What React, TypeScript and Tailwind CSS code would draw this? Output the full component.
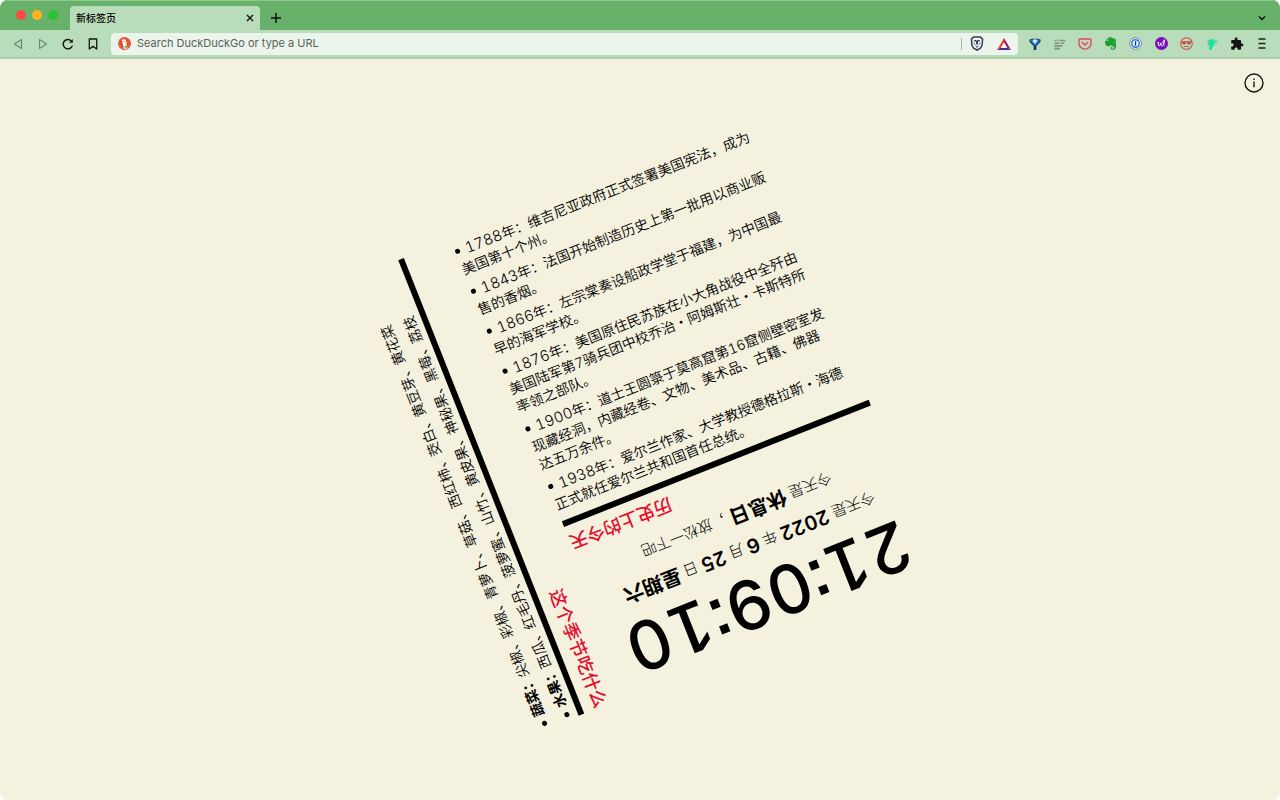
import type { ReactNode } from "react";
import { MdExtension } from "react-icons/md";
import { SiEvernote } from "react-icons/si";

const HISTORY = [
  { year: 1788, text: "维吉尼亚政府正式签署美国宪法，成为\n美国第十个州。" },
  { year: 1843, text: "法国开始制造历史上第一批用以商业贩\n售的香烟。" },
  { year: 1866, text: "左宗棠奏设船政学堂于福建，为中国最\n早的海军学校。" },
  {
    year: 1876,
    text: "美国原住民苏族在小大角战役中全歼由\n美国陆军第7骑兵团中校乔治・阿姆斯壮・卡斯特所\n率领之部队。",
  },
  {
    year: 1900,
    text: "道士王圆箓于莫高窟第16窟侧壁密室发\n现藏经洞，内藏经卷、文物、美术品、古籍、佛器\n达五万余件。",
  },
  { year: 1938, text: "爱尔兰作家、大学教授德格拉斯・海德\n正式就任爱尔兰共和国首任总统。" },
];

const SEASON = [
  { kind: "蔬菜", foods: ["尖椒", "彩椒", "青萝卜", "草菇", "西红柿", "茭白", "黄豆芽", "黄花菜"] },
  { kind: "水果", foods: ["西瓜", "红毛丹", "菠萝蜜", "山竹", "黄皮果", "神秘果", "黑莓", "荔枝"] },
];

function IconButton({ label, children }: { label: string; children: ReactNode }) {
  return (
    <button type="button" aria-label={label} className="flex size-4 shrink-0 items-center justify-center">
      {children}
    </button>
  );
}

function TabStrip() {
  return (
    <div className="flex h-[30px] items-end bg-[#68b16a] shadow-[inset_0_1px_0_#8fc591]">
      <div className="mb-2.5 ml-4 flex w-[54px] gap-1.5">
        <button type="button" aria-label="Close window" className="size-2.5 rounded-full bg-[#fe4a47]" />
        <button type="button" aria-label="Minimize window" className="size-2.5 rounded-full bg-[#fdb124]" />
        <button type="button" aria-label="Zoom window" className="size-2.5 rounded-full bg-[#29c231]" />
      </div>
      <div className="flex h-6 w-[190px] items-center justify-between rounded-t bg-[#b9dcba] pr-0.5 pl-1.5">
        <span className="text-[10px] font-medium text-black">新标签页</span>
        <IconButton label="Close tab">
          <svg viewBox="0 0 10 10" className="size-2.5" stroke="#111" strokeWidth="1.4">
            <path d="M2 2l6 6M8 2l-6 6" />
          </svg>
        </IconButton>
      </div>
      <div className="mb-1 ml-2 flex">
        <IconButton label="New tab">
          <svg viewBox="0 0 10 10" className="size-2.5" stroke="#111" strokeWidth="1.5">
            <path d="M5 0v10M0 5h10" />
          </svg>
        </IconButton>
      </div>
      <div className="mr-2.5 mb-1 ml-auto flex">
        <IconButton label="Search tabs">
          <svg viewBox="0 0 8 8" className="size-2" fill="none" stroke="#111" strokeWidth="1.4">
            <path d="M1 2.5l3 3 3-3" />
          </svg>
        </IconButton>
      </div>
    </div>
  );
}

function DuckIcon() {
  return (
    <svg viewBox="0 0 12 12" className="size-[13px] shrink-0">
      <circle cx="6" cy="6" r="6" fill="#de4b33" />
      <circle cx="6" cy="6" r="5" fill="none" stroke="#f0a08c" strokeWidth=".4" />
      <path d="M3.6 2.8c.7-1.2 3.6-1.2 3.9.9l.5 3.2.9 3.4a5 5 0 0 1-3.5.5z" fill="#fff" />
      <path d="M6.3 4.9c1.1-.4 2.4-.2 2.6.1s-1.2 1-2.4 1z" fill="#fdc20a" />
      <path d="M5.8 8.6l2.6-1v2.8l-2.6-.9z" fill="#65bc46" />
      <circle cx="5.7" cy="3.9" r=".5" fill="#2d4f8e" />
    </svg>
  );
}

function BraveIcon() {
  return (
    <svg viewBox="0 0 14 15" className="h-[15px] w-3.5">
      <path d="M3.6 1.1h6.8l2.2 2-.5 6L10.6 12 7 14.2 3.4 12 1.9 9.1l-.5-6z" fill="#f4f6f8" stroke="#3a3d4e" strokeWidth="1.5" />
      <path d="M3.8 4.2l1.6-.3L7 4.6l1.6-.7 1.6.3-.2 1-2.2.5.3 2.2L7 8.6l-1.1-.7.3-2.2L4 5.2z" fill="#3a3d4e" />
      <path d="M3.6 6.6l1.4 2M10.4 6.6l-1.4 2M5.4 9.6L7 10.6l1.6-1M7 10.6v1.6" fill="none" stroke="#3a3d4e" strokeWidth=".8" />
    </svg>
  );
}

function BatIcon() {
  return (
    <svg viewBox="0 0 14 12" className="h-3 w-3.5">
      <path d="M7 0L0 12l3.9-2.2L7 4.4z" fill="#ff3a24" />
      <path d="M7 0l7 12-3.9-2.2L7 4.4z" fill="#9e1f63" />
      <path d="M0 12h14l-3.9-2.2H3.9z" fill="#4b2a8f" />
      <path d="M7 4.4l3.1 5.4H3.9z" fill="#fff" />
    </svg>
  );
}

function Extensions() {
  return (
    <div className="flex w-[262px] shrink-0 items-center justify-between pr-2.5 pl-[9px]">
      <IconButton label="Video helper">
        <svg viewBox="0 0 12 12" className="size-3">
          <path d="M.2 1.8L3 .8h6l2.8 1-.6 2.4L7.4 8v4H4.6V8L.8 4.2z" fill="#173f6e" />
          <path d="M1.4 2.6L4 1.8h4l2.6.8L6 7.6z" fill="#2590ec" />
          <path d="M3.8 1.4h4.4L7.4 4.6 6 5.6 4.6 4.6z" fill="#d3ecfb" />
        </svg>
      </IconButton>
      <IconButton label="Reading list">
        <svg viewBox="0 0 12 12" className="size-3" stroke="#7f9481" strokeWidth="1.6">
          <path d="M.5 2.5h2M3.5 2.5h1.6M6 2.5h5.5M.5 5.2h5M6.6 5.2h3.6M.5 7.9h8M.5 10.6h5.5" />
        </svg>
      </IconButton>
      <IconButton label="Pocket">
        <svg viewBox="0 0 14 12" className="h-3 w-3.5" fill="none" stroke="#e8465c" strokeWidth="1.4" strokeLinejoin="round" strokeLinecap="round">
          <path d="M2 1h10a1 1 0 0 1 1 1v3.5a6 5.6 0 0 1-12 0V2a1 1 0 0 1 1-1z" />
          <path d="M4.3 4.6L7 7.1l2.7-2.5" />
        </svg>
      </IconButton>
      <IconButton label="Evernote">
        <SiEvernote className="size-[13px] text-[#1aa12f]" />
      </IconButton>
      <IconButton label="1Password">
        <svg viewBox="0 0 14 14" className="size-[13px]">
          <circle cx="7" cy="7" r="6.3" fill="#f7fafc" stroke="#74848f" />
          <circle cx="7" cy="7" r="4.1" fill="#fff" stroke="#1a73e8" strokeWidth="1.6" />
          <path d="M7 4.6v4.8" stroke="#243447" strokeWidth="1.6" />
        </svg>
      </IconButton>
      <IconButton label="Wallabag">
        <svg viewBox="0 0 14 14" className="size-[13px]" fill="none">
          <circle cx="7" cy="7" r="7" fill="#7a0dbd" />
          <path d="M2.4 6.4c1.2-1.2 1.9-.9 1.4 1.2-.6 2.8 1.6 2.6 2.8-1.4-.8 4.4 1.4 4.6 3 .8 1-2.4.9-4.2.1-4s-1.5 3.6.3 6.4" stroke="#fff" strokeWidth="1" />
        </svg>
      </IconButton>
      <IconButton label="Sunglasses">
        <svg viewBox="0 0 14 14" className="size-[13px]" fill="none" stroke="#cf4b45">
          <circle cx="7" cy="7" r="6.2" strokeWidth="1.1" />
          <path d="M1 5.2h12" />
          <path d="M2.5 5.2h3.8v1.6l-1 1H3.4l-.9-1zM7.7 5.2h3.8v1.6l-.9 1H8.7l-1-1z" fill="#cf4b45" strokeWidth=".4" />
          <path d="M4.4 10.2h5.2" />
        </svg>
      </IconButton>
      <IconButton label="Hummingbird">
        <svg viewBox="0 0 12 12" className="size-3" fill="#1fe0a0">
          <path d="M0 1.8l3.4.3L5 1.2l1.2.4L8.4.2l-.6 2.2 4 .5-.8 1.5-2.6.2 1.2 2.6-2-.6-.4 1.6L5.4 12H3.2l-.4-2.8 1-2.6L2 7.6 1.2 6l2-2.2z" />
        </svg>
      </IconButton>
      <IconButton label="Extensions">
        <MdExtension className="size-3.5 text-[#151515]" />
      </IconButton>
      <IconButton label="Menu">
        <svg viewBox="0 0 8 11" className="h-[11px] w-2" stroke="#222" strokeWidth="1.3">
          <path d="M.5 1h7M.5 5.5h7M.5 10h7" />
        </svg>
      </IconButton>
    </div>
  );
}

function Toolbar() {
  return (
    <div className="flex h-[29px] items-center border-b-2 border-[#adcfad] bg-[#b9dcba]">
      <div className="flex shrink-0 items-center gap-[9px] px-2.5">
        <IconButton label="Back">
          <svg viewBox="0 0 10 12" className="h-3 w-2.5" fill="none" stroke="#6b866c" strokeWidth="1.1" strokeLinejoin="round">
            <path d="M8.5 1.5v9L1.5 6z" />
          </svg>
        </IconButton>
        <IconButton label="Forward">
          <svg viewBox="0 0 10 12" className="h-3 w-2.5" fill="none" stroke="#6b866c" strokeWidth="1.1" strokeLinejoin="round">
            <path d="M1.5 1.5v9l7-4.5z" />
          </svg>
        </IconButton>
        <IconButton label="Reload">
          <svg viewBox="0 0 12 12" className="size-3" fill="none" stroke="#151515" strokeWidth="1.4">
            <path d="M10.4 7.6A4.7 4.7 0 1 1 9.4 3" />
            <path d="M10.8 1v3.8H7z" fill="#151515" stroke="none" />
          </svg>
        </IconButton>
        <IconButton label="Bookmark">
          <svg viewBox="0 0 10 12" className="h-3 w-2.5" fill="none" stroke="#151515" strokeWidth="1.3" strokeLinejoin="round">
            <path d="M1.3 1h7.4v10L5 8.4 1.3 11z" />
          </svg>
        </IconButton>
      </div>
      <div className="flex h-[22px] min-w-0 flex-1 items-center rounded bg-[#ebf5eb] pl-[7px]">
        <DuckIcon />
        <input
          type="text"
          aria-label="Address"
          placeholder="Search DuckDuckGo or type a URL"
          className="ml-1.5 min-w-0 flex-1 bg-transparent text-[11px] outline-none placeholder:text-[#59605a]"
        />
        <span className="h-3 w-px bg-[#adb5ad]" />
        <span className="flex items-center gap-[11px] pr-1.5 pl-[7px]">
          <IconButton label="Brave Shields">
            <BraveIcon />
          </IconButton>
          <IconButton label="Brave Rewards">
            <BatIcon />
          </IconButton>
        </span>
      </div>
      <Extensions />
    </div>
  );
}

function Bullet() {
  return <span className="mr-1.5 mb-[3px] inline-block size-[5px] rounded-full bg-black align-baseline" />;
}

function VerticalBullet() {
  return <span className="mb-1.5 inline-block size-[5px] rounded-full bg-black align-middle" />;
}

function Season() {
  return (
    <section className="flex">
      <ul className="flex rotate-180 flex-col gap-[5px] pt-[3px] text-[14px] leading-[19px] font-[350] whitespace-nowrap [text-orientation:sideways] [writing-mode:vertical-rl]">
        {SEASON.map(({ kind, foods }) => (
          <li key={kind}>
            <VerticalBullet />
            <b className="font-bold">{kind}：</b>
            {foods.join("、")}
          </li>
        ))}
      </ul>
      <div className="mr-1.5 ml-[3px] w-1.5 bg-black" />
      <h2 className="self-end text-[18px] leading-6 font-medium text-[#e60a2d] [text-orientation:sideways] [writing-mode:vertical-rl]">
        这个季节吃什么
      </h2>
    </section>
  );
}

function History() {
  return (
    <section>
      <ul className="flex flex-col gap-[5px] text-[14px] leading-[19px] font-[350] whitespace-pre tabular-nums">
        {HISTORY.map(({ year, text }) => (
          <li key={year}>
            <Bullet />
            <span className="text-[15px] leading-[19px]">{year}</span>年：{text}
          </li>
        ))}
      </ul>
      <div className="mt-2 mb-[5px] h-1.5 bg-black" />
      <h2 className="w-fit rotate-180 text-[18px] leading-6 font-medium text-[#e60a2d]">历史上的今天</h2>
    </section>
  );
}

function Strong({ children }: { children: ReactNode }) {
  return <b className="text-xl leading-7 font-bold">{children}</b>;
}

function Num({ children }: { children: ReactNode }) {
  return <b className="text-xl leading-7 font-semibold">{children}</b>;
}

function Clock() {
  return (
    <section className="flex rotate-180 flex-col items-center gap-1 text-[15px] whitespace-nowrap tabular-nums">
      <time className="text-[68px] leading-[72px] font-medium [font-feature-settings:'ss07']">21:09:10</time>
      <p className="leading-7">
        今天是 <Num>2022</Num> 年 <Num>6</Num> 月 <Num>25</Num> 日 <Strong>星期六</Strong>
      </p>
      <p className="leading-7">
        今天是 <Strong>休息日</Strong> ，放松一下吧
      </p>
    </section>
  );
}

export default function App() {
  return (
    <div className="bg-white font-['Inter','Noto_Sans_CJK_SC',sans-serif]" lang="zh-CN">
      <div className="flex min-h-screen flex-col overflow-hidden rounded-lg bg-[#f4f1de]">
        <TabStrip />
        <Toolbar />
        <main className="flex flex-1 flex-col text-black">
          <div className="flex h-12 items-center justify-end pr-4">
            <button type="button" aria-label="About">
              <svg viewBox="0 0 20 20" className="size-5" fill="none" stroke="#151515" strokeWidth="1.4">
                <circle cx="10" cy="10" r="9" />
                <path d="M10 8.5v5.7M10 5.5v1.6" />
              </svg>
            </button>
          </div>
          <div className="-mt-12 flex flex-1 items-center justify-center pb-1 font-light">
            <div className="flex h-[490px] w-[446px] rotate-[-21.6deg] justify-between pl-3.5">
              <Season />
              <div className="flex w-[330px] flex-col justify-between py-1">
                <History />
                <Clock />
              </div>
            </div>
          </div>
        </main>
      </div>
    </div>
  );
}
